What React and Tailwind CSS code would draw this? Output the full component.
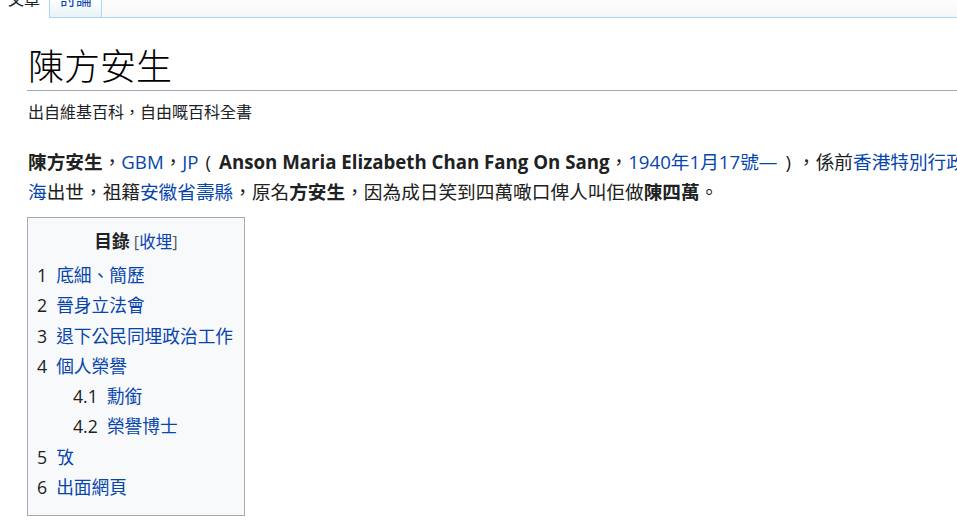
// Page de wiki : onglets, titre, chapeau et table des matières
const sans = { fontFamily: '"Open Sans", "Noto Sans CJK TC", sans-serif' };

function Lien({ children }) {
    return <a className="text-[#0645ad]">{children}</a>;
}

const sommaire = [
    { num: '1', titre: '底細、簡歷', niveau: 1 },
    { num: '2', titre: '晉身立法會', niveau: 1 },
    { num: '3', titre: '退下公民同埋政治工作', niveau: 1 },
    { num: '4', titre: '個人榮譽', niveau: 1 },
    { num: '4.1', titre: '勳銜', niveau: 2 },
    { num: '4.2', titre: '榮譽博士', niveau: 2 },
    { num: '5', titre: '攷', niveau: 1 },
    { num: '6', titre: '出面網頁', niveau: 1 },
];

function App() {
    return (
        <div className="w-full min-h-screen bg-white overflow-hidden text-[#202122]" style={sans}>
            {/* Barre d'onglets coupée en haut */}
            <div className="flex h-[18px] overflow-hidden bg-gradient-to-b from-[#fdfdfd] to-[#f6f6f6]">
                <div className="w-[49px] bg-white text-[16px] leading-[16px] -mt-[9px] pl-[8px] text-[#202122]">
                    文章
                </div>
                <div className="w-[53px] border-x border-b border-[#a7d7f9] bg-gradient-to-b from-[#ffffff] to-[#e8f2f8]">
                    <div className="text-[16px] leading-[16px] -mt-[9px] pl-[10px] text-[#0645ad]">討論</div>
                </div>
                <div className="flex-1 border-b border-[#a7d7f9]"></div>
            </div>

            <div className="pl-[28px]">
                {/* Titre */}
                <h1 className="mt-[26px] text-[36px] leading-[46px] font-light border-b border-[#a2a9b1] -ml-px pl-px text-black">
                    陳方安生
                </h1>
                <div className="mt-[9px] text-[16px] leading-[24px] text-[#202122]">出自維基百科，自由嘅百科全書</div>

                {/* Chapeau */}
                <div className="mt-[23px] text-[18.67px] leading-[30px] whitespace-nowrap">
                    <div>
                        <b>陳方安生</b>，<Lien>GBM</Lien>，<Lien>JP</Lien><span className="pl-[7px] pr-[8px]">(</span><b>Anson Maria Elizabeth Chan Fang On Sang</b>，<Lien>1940年1月17號—</Lien><span className="pl-[8px] pr-[6px]">)</span>，係前<Lien>香港特別行政區</Lien>政務司司長，喺<Lien>上</Lien>
                    </div>
                    <div>
                        <Lien>海</Lien>出世，祖籍<Lien>安徽省壽縣</Lien>，原名<b>方安生</b>，因為成日笑到四萬噉口俾人叫佢做<b>陳四萬</b>。
                    </div>
                </div>

                {/* Table des matières */}
                <div className="mt-[10px] -ml-px w-[218px] border border-[#a2a9b1] bg-[#f8f9fa] pt-[8px] pb-[13px] pl-[9px]">
                    <div className="text-center leading-[30px] pr-[9px]">
                        <span className="font-bold text-[17.7px]">目錄</span>{' '}
                        <span className="text-[16.5px] text-[#54595d]">[<Lien>收埋</Lien>]</span>
                    </div>
                    <ul className="mt-[3px] text-[17.7px] leading-[30.3px]">
                        {sommaire.map((item) => (
                            <li key={item.num} className={item.niveau === 2 ? 'pl-[36px]' : ''}>
                                <span className="text-[#202122] pr-[9px]">{item.num}</span>
                                <Lien>{item.titre}</Lien>
                            </li>
                        ))}
                    </ul>
                </div>
            </div>
        </div>
    );
}

export default App;
